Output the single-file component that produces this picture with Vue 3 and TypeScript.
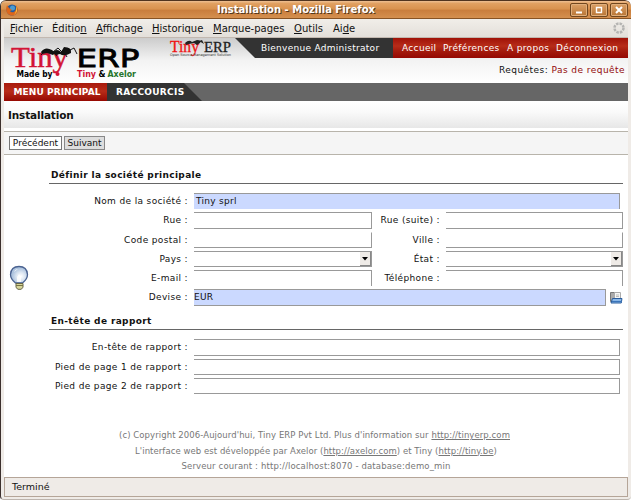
<script setup lang="ts">
const menus: [string, string, string][] = [
  ['', 'F', 'ichier'], ['Éditio', 'n', ''], ['', 'A', 'ffichage'], ['', 'H', 'istorique'],
  ['', 'M', 'arque-pages'], ['', 'O', 'utils'], ['Ai', 'd', 'e'],
]
const links: string[] = ['Accueil', 'Préférences', 'A propos', 'Déconnexion']
interface Field { label: string; select?: boolean; edge?: string }
const pairs: [Field, Field][] = [
  [{ label: 'Rue :' }, { label: 'Rue (suite) :' }],
  [{ label: 'Code postal :', edge: 'no-top' }, { label: 'Ville :', edge: 'no-top' }],
  [{ label: 'Pays :', select: true }, { label: 'État :', select: true }],
  [{ label: 'E-mail :', edge: 'no-bottom' }, { label: 'Téléphone :', edge: 'no-bottom' }],
]
const reports: string[] = ['En-tête de rapport :', 'Pied de page 1 de rapport :', 'Pied de page 2 de rapport :']
</script>

<template>
  <div class="window">
    <header class="titlebar">
      <svg class="fox" width="14" height="14" viewBox="0 0 14 14">
        <circle cx="7" cy="7" r="5.500" fill="#245a9c" />
        <circle cx="7.500" cy="5" r="2.500" fill="#4b9bd0" />
        <path d="M2 2Q0 8 3 11Q8 15 12 10Q14 6 11 2Q12 7 9 9Q6 10 5 8L7 7L4 5Z" fill="#dc661b" />
        <path d="M11 3Q14 8 9 12Q12 8 11 3Z" fill="#f6c443" />
      </svg>
      <h1>Installation - Mozilla Firefox</h1>
      <div class="winbtns">
        <span><svg width="16" height="12"><path d="M5 8.500h6" stroke="#fff" stroke-width="2" /></svg></span>
        <span><svg width="16" height="12"><path d="M5.500 3.500h5v5h-5z" fill="none" stroke="#fff" stroke-width="1.400" /></svg></span>
        <span><svg width="16" height="12"><path d="M5 3l6 6M11 3l-6 6" stroke="#fff" stroke-width="2" /></svg></span>
      </div>
    </header>
    <nav class="menubar">
      <span v-for="m in menus" :key="m[1] + m[2]">{{ m[0] }}<u>{{ m[1] }}</u>{{ m[2] }}</span>
      <svg class="throbber" width="14" height="14" viewBox="0 0 14 14"><circle cx="7" cy="7" r="4.500" fill="none" stroke="#b5b4b2" stroke-width="2.500" stroke-dasharray="2.500 1.030" /></svg>
    </nav>

    <main class="page">
      <section class="head">
        <svg class="logo" width="145" height="45" viewBox="0 0 145 45">
          <text x="7" y="29" class="serif" font-size="29" textLength="57" lengthAdjust="spacingAndGlyphs">Tiny</text>
          <text x="72.500" y="29" class="erp" font-size="25.500" textLength="63" lengthAdjust="spacingAndGlyphs">ERP</text>
          <path d="M37 14Q41 8 48 12Q52 15 49 17L43 15L38 16ZM49 14Q53 10 57 14L60 9Q68 9 67 15Q60 19 56 16L51 17Z" fill="#111" />
          <path d="M49 14l5-4 4 4M55 13l-3 5M60 14l3 5M66 12l4-2 3 6M42 12l-5 5" fill="none" stroke="#111" />
          <circle cx="53.500" cy="36" r="2" fill="#d21436" />
          <text x="12.500" y="39" class="small" textLength="36" lengthAdjust="spacingAndGlyphs">Made by</text>
          <text x="73" y="39" class="small" fill="#d21436" textLength="19" lengthAdjust="spacingAndGlyphs">Tiny</text>
          <text x="94.500" y="39" class="small" textLength="7" lengthAdjust="spacingAndGlyphs">&amp;</text>
          <text x="103.500" y="39" class="small" fill="#26752b" textLength="28.500" lengthAdjust="spacingAndGlyphs">Axelor</text>
        </svg>
        <svg class="minilogo" width="66" height="20" viewBox="0 0 66 20">
          <text x="1" y="14" class="serif" font-size="16" textLength="29" lengthAdjust="spacingAndGlyphs">Tiny</text>
          <text x="35" y="14" class="mini-erp" font-size="15" textLength="27" lengthAdjust="spacingAndGlyphs">ERP</text>
          <path d="M16 5Q20 1 23 4L28 2Q33 2 31 5L28 7L25 5L20 6L17 7ZM30 3l3-1 2 4" fill="#222" />
          <text x="1" y="17.500" font-size="3.500" fill="#333" textLength="61" lengthAdjust="spacingAndGlyphs">Open Source Management Solution</text>
        </svg>
        <div class="right">
          <div class="userbar">
            <div class="welcome">Bienvenue Administrator</div>
            <div class="links"><a v-for="l in links" :key="l">{{ l }}</a></div>
          </div>
          <div class="requests">Requêtes: <a>Pas de requête</a></div>
        </div>
      </section>

      <div class="tabs">
        <div class="tab main">MENU PRINCIPAL</div>
        <div class="tab short">RACCOURCIS</div>
      </div>
      <h2>Installation</h2>
      <div class="toolbar">
        <button class="prev">Précédent</button><button class="next">Suivant</button>
      </div>

      <div class="content">
        <aside>
          <svg width="20" height="26" viewBox="0 0 20 26">
            <defs><radialGradient id="bulb" cx=".6" cy=".6"><stop offset="0" stop-color="#fff" /><stop offset=".5" stop-color="#dce6f2" /><stop offset="1" stop-color="#adc3de" /></radialGradient></defs>
            <path d="M6.500 18Q1.500 14 1.500 9.500Q2 1.500 10 1.500Q18 1.500 18.500 9.500Q18.500 14 13.500 18Z" fill="url(#bulb)" stroke="#4a6290" stroke-width="1.300" />
            <path d="M5 7Q6 4 9 4M8 12l2-3 2 3v5H8z" fill="#fff" opacity=".8" />
            <path d="M7 18.500h7v4l-2 1.800H9l-2-1.800z" fill="#d7d59a" stroke="#666547" />
            <path d="M7 20.500h7" stroke="#777443" />
          </svg>
        </aside>
        <div class="form">
          <h3 class="first">Définir la société principale</h3>
          <div class="grid">
            <label>Nom de la société :</label><div class="input required wide no-bottom">Tiny sprl</div>
            <template v-for="(p, i) in pairs" :key="i">
              <template v-for="f in p" :key="f.label">
                <label>{{ f.label }}</label>
                <div class="input" :class="[f.edge, { select: f.select }]"><span v-if="f.select" class="arrow"><svg width="6" height="4"><path d="M0 0h6L3 3.500z" /></svg></span></div>
              </template>
            </template>
            <label>Devise :</label>
            <div class="lookup">
              <div class="input required eur">EUR</div>
              <svg width="13" height="13" viewBox="0 0 13 13">
                <path d="M.500 1.500h4l1 1v8h-5z" fill="#aaa" stroke="#777" />
                <path d="M4.500 1.500h6v8h-6z" fill="#f7f7f5" stroke="#aaa" />
                <path d="M6 4h3M6 5.500h3" stroke="#bbb" />
                <path d="M2.500 7.500h9.500l-.7 4.500H1z" fill="#8ab8e8" stroke="#285b9c" />
                <path d="M2 10.500h10" stroke="#3973b9" />
              </svg>
            </div>
          </div>
          <h3 class="second">En-tête de rapport</h3>
          <div class="grid reports">
            <template v-for="r in reports" :key="r"><label>{{ r }}</label><div class="input wide"></div></template>
          </div>
        </div>
      </div>
      <footer>
        <p class="f1">(c) Copyright 2006-Aujourd'hui, Tiny ERP Pvt Ltd. Plus d'information sur <u>http://tinyerp.com</u></p>
        <p class="f2">L'interface web est développée par Axelor (<u>http://axelor.com</u>) et Tiny (<u>http://tiny.be</u>)</p>
        <p class="f3">Serveur courant : http://localhost:8070 - database:demo_min</p>
      </footer>
    </main>
    <div class="status">Terminé</div>
  </div>
</template>

<style>
body { margin: 0; background: #fff; overflow: hidden; }
</style>
<style scoped>
* { box-sizing: border-box; }
.window { width: 631px; height: 500px; display: flex; flex-direction: column; padding: 0 3px; background: #efebe7; border-left: 1px solid #3c302d; border-bottom: 1px solid #bdb5ae; border-radius: 6px 6px 4px 4px; overflow: hidden; font-family: "DejaVu Sans", sans-serif; font-size: 9px; color: #111; white-space: nowrap; }
.titlebar { height: 19px; flex: none; margin: 0 -3px 0 -4px; display: grid; grid-template-columns: 195px 202px 1fr; align-items: center; border-top: 1px solid #51341f; border-bottom: 1px solid #875324; border-radius: 6px 6px 0 0; background: linear-gradient(#efc093 0, #e1a061 15%, #d9924e 48%, #c97d3c 53%, #d5904f 100%); }
.fox { margin-left: 5px; }
h1 { margin: 0; text-align: center; font-size: 10px; line-height: 16px; color: #fff; text-shadow: 1px 1px 0 #54371d; }
.winbtns { display: flex; gap: 2px; justify-content: flex-end; padding-right: 3px; }
.winbtns span { width: 18px; height: 14px; border: 1px solid #71471f; border-radius: 2px; display: flex; background: linear-gradient(#dba066, #b87535); box-shadow: inset 0 0 0 1px #e0ae7b; }
.menubar { height: 19px; flex: none; padding-left: 6px; display: grid; grid-template-columns: 42px 44px 56px 61px 81px 39px 1fr auto; align-items: center; font-size: 10px; border-bottom: 1px solid #c2b8b0; background: linear-gradient(#f1eee9, #e3dfda); }
.throbber { margin-right: 2px; }
.page { flex: 1; min-height: 0; background: #fff; display: flex; flex-direction: column; }
.head { height: 45px; flex: none; display: flex; background: linear-gradient(#ccc, #f3f3f3 50%, #fff); }
.logo, .minilogo { flex: none; display: block; }
.minilogo { margin-left: 20px; }
.serif, .mini-erp { font-family: "Liberation Serif", serif; }
.logo .serif { fill: #d21436; stroke: #d21436; stroke-width: .5; }
.minilogo .serif { fill: #f01414; stroke: #f01414; stroke-width: .3; }
.mini-erp { fill: #222; stroke: #222; stroke-width: .3; }
.erp { stroke: #000; stroke-width: .8; }
.small { font-size: 8px; font-weight: bold; }
.right { flex: 1; }
.userbar { height: 20px; display: flex; line-height: 20px; color: #fff; background: #333; clip-path: polygon(0 0, 100% 0, 100% 100%, 20px 100%); }
.welcome { width: 158px; padding-left: 26px; letter-spacing: .28px; }
.links { flex: 1; padding-left: 9px; display: grid; grid-template-columns: 41px 64px 49px 1fr; letter-spacing: .33px; background: linear-gradient(#a01208, #b72c19 40%, #a41b0d 65%, #950802); }
.requests { height: 25px; line-height: 25px; text-align: right; padding-right: 3px; letter-spacing: .45px; }
.requests a { color: #930b0b; }
.tabs { height: 18px; flex: none; display: flex; background: #666; color: #fff; font-weight: bold; line-height: 18px; }
.tab.main { width: 103px; padding-left: 9.500px; letter-spacing: .08px; background: linear-gradient(#a81a0d, #b82c19 45%, #960902); }
.tab.short { width: 95px; padding-left: 9px; letter-spacing: .3px; background: #333; clip-path: polygon(0 0, 77px 0, 100% 100%, 0 100%); }
h2 { height: 27px; flex: none; margin: 0 0 3px; padding: 1px 0 0 4px; font-size: 10.500px; line-height: 27px; letter-spacing: -.15px; background: linear-gradient(#fff, #fafafa 40%, #e7e7e7); }
.toolbar { height: 24px; flex: none; padding: 4px 5px; display: flex; gap: 2px; background: #f5f5f5; border-top: 1px solid #b8b4ab; border-bottom: 1px solid #b8b4ab; }
button { height: 14px; padding: 0; border: 1px solid #777; background: #fff; font: 9px/11px "DejaVu Sans", sans-serif; color: #111; }
.prev { width: 53px; }
.next { width: 41px; background: #ddd; border-color: #888; }
.content { display: flex; flex: none; height: 242px; }
aside { width: 45px; padding: 110px 0 0 5px; }
.form { flex: 1; }
h3 { height: 16px; margin: 0 5px 9px 0; border-bottom: 1px solid #666; font-size: 9px; line-height: 15px; padding-left: 2px; letter-spacing: .36px; }
.first { margin-top: 13px; }
.second { margin-top: 8px; }
.grid { display: grid; grid-template-columns: 139px 6px 178px 68px 5px 178px; grid-template-rows: 16px 17px 17px 16px 16px 17px; row-gap: 3px; height: 113px; }
.grid { grid-template-rows: 16px 17px 16px 16px 16px 17px; }
.reports { grid-template-rows: 17px 16px 16px; height: auto; }
label { text-align: right; line-height: 16px; letter-spacing: .36px; }
.input { grid-column: span 2; margin-left: 6px; border: 1px solid #999; border-left: 0; background: #fff; line-height: 15px; position: relative; }
.no-top { border-top-color: transparent; }
.no-bottom { border-bottom: 0; }
.wide { grid-column: 2 / -1; margin-right: 3px; }
.required { background: #cbd9ff; letter-spacing: .3px; }
.required.wide { padding-left: 2px; }
.lookup { grid-column: 2 / -1; display: flex; gap: 4px; align-items: center; }
.eur { width: 413px; height: 17px; }
.arrow { position: absolute; right: 0; top: 0; width: 11px; height: 14px; display: flex; align-items: center; justify-content: center; background: #efebe7; border-right: 1px solid #888; border-bottom: 1px solid #888; }
footer { padding-top: 31px; text-align: center; color: #777; font-size: 8.500px; }
p { margin: 0; line-height: 15.500px; }
.f1 { letter-spacing: .08px; padding-right: 3px; }
.f2 { letter-spacing: .06px; }
.f3 { letter-spacing: .14px; }
.status { height: 20px; flex: none; margin-bottom: 2px; padding-left: 7px; line-height: 17px; font-size: 9.500px; border: 1px solid #b5a598; background: #efebe7; }
</style>
